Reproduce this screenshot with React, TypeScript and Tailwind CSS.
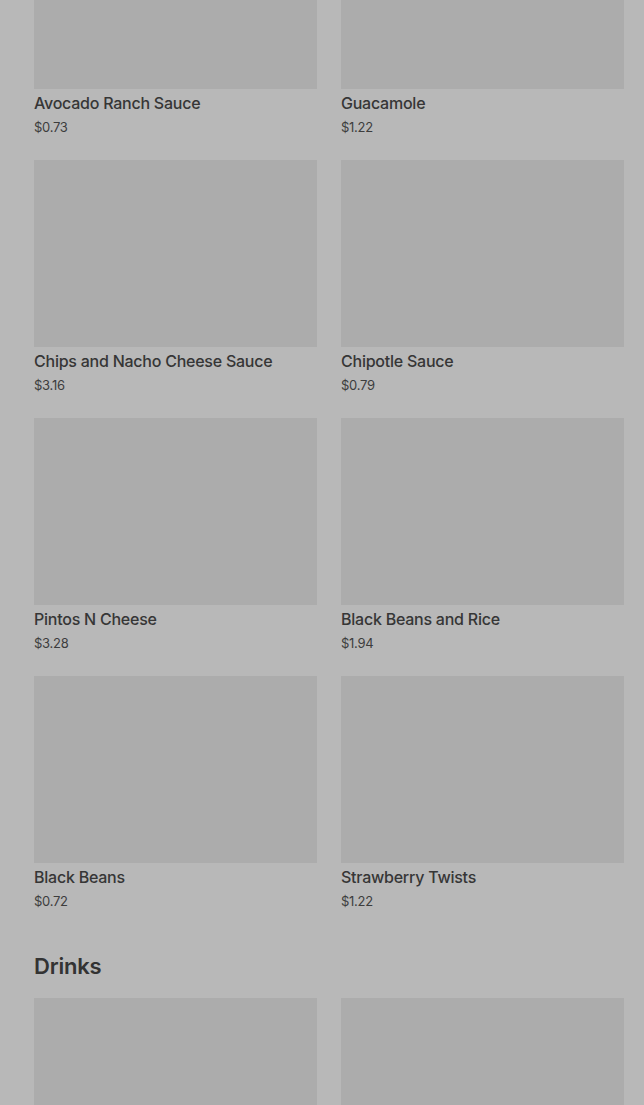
import React from "react";

type Item = { name: string; price: string };

const sides: Item[] = [
  { name: "Avocado Ranch Sauce", price: "$0.73" },
  { name: "Guacamole", price: "$1.22" },
  { name: "Chips and Nacho Cheese Sauce", price: "$3.16" },
  { name: "Chipotle Sauce", price: "$0.79" },
  { name: "Pintos N Cheese", price: "$3.28" },
  { name: "Black Beans and Rice", price: "$1.94" },
  { name: "Black Beans", price: "$0.72" },
  { name: "Strawberry Twists", price: "$1.22" },
];

function ItemCard({ item }: { item: Item }) {
  return (
    <div className="flex flex-col">
      <div className="h-[187px] w-full bg-[#acacac]" />
      <p className="mt-1 text-base leading-5 font-medium tracking-[-0.015em] text-[#363636]">{item.name}</p>
      <p className="mt-1 text-[13px] leading-5 tracking-[-0.02em] text-[#3d3d3d]">{item.price}</p>
    </div>
  );
}

export default function App() {
  return (
    <div
      className="h-[1105px] overflow-hidden bg-[#b8b8b8]"
      style={{ fontFamily: "Inter, 'Noto Sans', sans-serif" }}
    >
      <div className="-mt-[98px] pl-[34px] pr-5">
        <div className="grid grid-cols-2 gap-x-6 gap-y-[23px]">
          {sides.map((item) => (
            <ItemCard key={item.name} item={item} />
          ))}
        </div>

        <h2 className="mt-[39px] text-[22px] leading-8 font-semibold tracking-[-0.01em] text-[#333333]">Drinks</h2>
        <div className="mt-4 grid grid-cols-2 gap-x-6">
          <div className="h-[187px] bg-[#acacac]" />
          <div className="h-[187px] bg-[#acacac]" />
        </div>
      </div>
    </div>
  );
}
